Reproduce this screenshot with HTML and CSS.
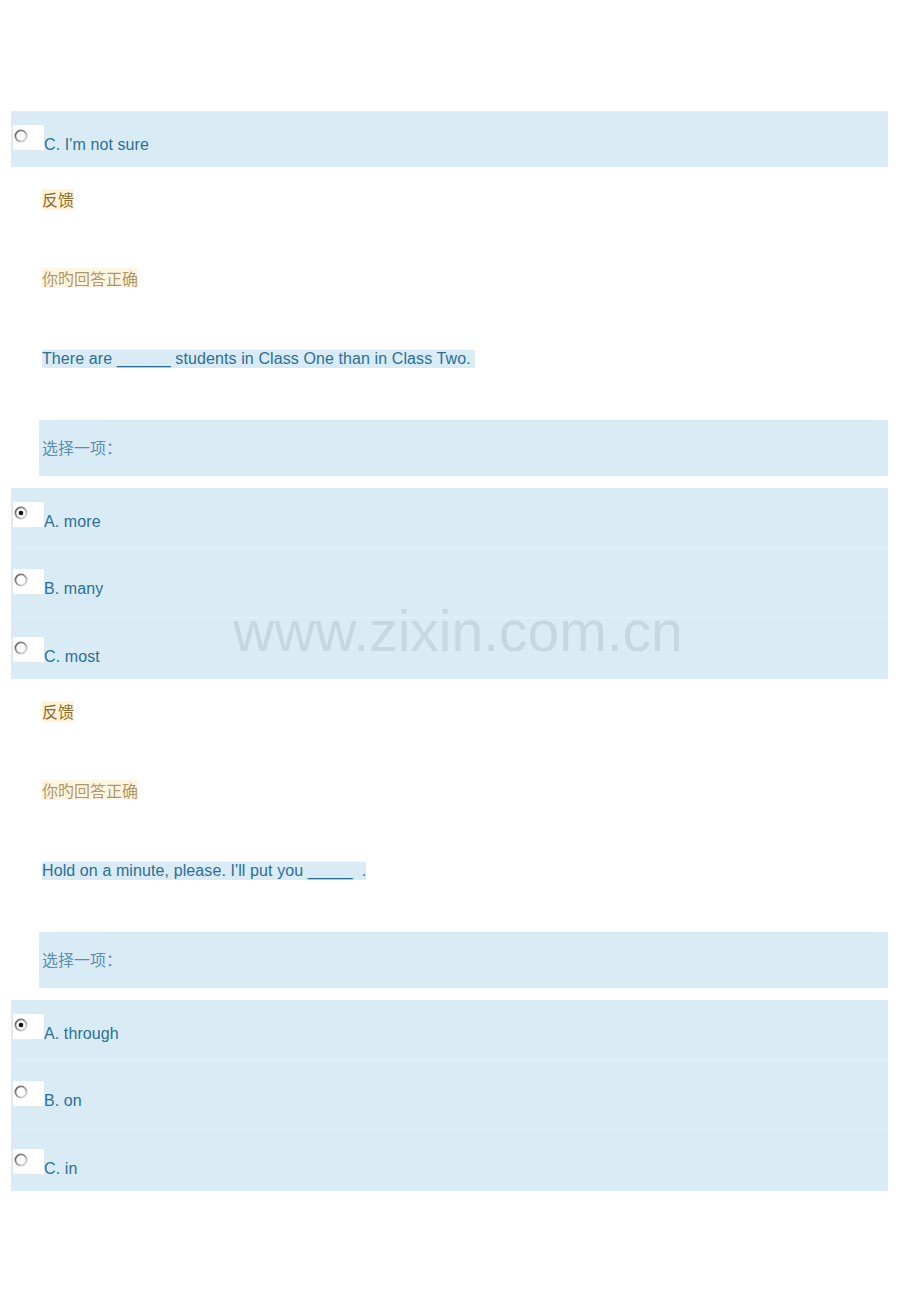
FILE: index.html
```html
<!DOCTYPE html>
<html lang="zh">
<head>
<meta charset="utf-8">
<title>Quiz</title>
<link rel="stylesheet" href="styles.css">
</head>
<body>
<div class="page">
  <div class="opts">
    <div class="opt only"><svg class="radio" width="31" height="25" viewBox="0 0 31 25"><use href="#r-off"/></svg>C. I'm not sure</div>
  </div>

  <div class="fb-label"><span>反馈</span></div>
  <div class="fb-text"><span>你旳回答正确</span></div>
  <div class="qtext"><span>There are ______ students in Class One than in Class Two. </span></div>
  <div class="prompt">选择一项：</div>
  <div class="opts">
    <div class="opt"><svg class="radio" width="31" height="25" viewBox="0 0 31 25"><use href="#r-on"/></svg>A. more</div>
    <div class="opt"><svg class="radio" width="31" height="25" viewBox="0 0 31 25"><use href="#r-off"/></svg>B. many</div>
    <div class="opt"><svg class="radio" width="31" height="25" viewBox="0 0 31 25"><use href="#r-off"/></svg>C. most</div>
  </div>

  <div class="fb-label"><span>反馈</span></div>
  <div class="fb-text"><span>你旳回答正确</span></div>
  <div class="qtext"><span>Hold on a minute, please. I'll put you _____&nbsp; .</span></div>
  <div class="prompt">选择一项：</div>
  <div class="opts">
    <div class="opt"><svg class="radio" width="31" height="25" viewBox="0 0 31 25"><use href="#r-on"/></svg>A. through</div>
    <div class="opt"><svg class="radio" width="31" height="25" viewBox="0 0 31 25"><use href="#r-off"/></svg>B. on</div>
    <div class="opt"><svg class="radio" width="31" height="25" viewBox="0 0 31 25"><use href="#r-off"/></svg>C. in</div>
  </div>

  <div class="watermark">www.zixin.com.cn</div>

  <svg class="defs" width="0" height="0">
    <defs>
      <linearGradient id="ring" x1="0" y1="0" x2="1" y2="1">
        <stop offset="0" stop-color="#555555"/>
        <stop offset="0.5" stop-color="#9a9a9a"/>
        <stop offset="1" stop-color="#e6e6e6"/>
      </linearGradient>
      <g id="r-off">
        <rect x="0" y="0" width="31" height="25" fill="#ffffff"/>
        <circle cx="8" cy="11" r="5.6" fill="#ffffff" stroke="url(#ring)" stroke-width="1.8"/>
      </g>
      <g id="r-on">
        <rect x="0" y="0" width="31" height="25" fill="#ffffff"/>
        <circle cx="8" cy="11" r="5.6" fill="#ffffff" stroke="url(#ring)" stroke-width="1.8"/>
        <circle cx="8" cy="11" r="2.3" fill="#111111"/>
      </g>
    </defs>
  </svg>
</div>
</body>
</html>
```

FILE: styles.css
```css
html, body {
  margin: 0;
  padding: 0;
  background: #ffffff;
}

body {
  font-family: "Liberation Sans", Arial, "Noto Sans CJK SC", sans-serif;
  font-size: 16px;
  color: #2d6e98;
}

.page {
  position: relative;
  width: 920px;
  height: 1302px;
  padding-top: 111px;
  box-sizing: border-box;
  overflow: hidden;
}

.defs {
  position: absolute;
  left: 0;
  top: 0;
}

.opts {
  margin-left: 11px;
  width: 877px;
  background: #d9ecf6;
  margin-top: 12px;
}

.opts:first-child {
  margin-top: 0;
}

.opt {
  box-sizing: border-box;
  padding-left: 2px;
  white-space: nowrap;
  line-height: normal;
  letter-spacing: 0.1px;
  color: #2d6e98;
}

.opt:nth-child(1) {
  height: 60px;
  padding-top: 14px;
}

.opt:nth-child(2) {
  height: 69px;
  padding-top: 20px;
  border-top: 1px solid #e2f1f9;
}

.opt:nth-child(3) {
  height: 62px;
  padding-top: 19px;
  border-top: 1px solid #e2f1f9;
}

.opt.only {
  height: 56px;
  padding-top: 14px;
}

.radio {
  display: inline-block;
  vertical-align: baseline;
}

.fb-label,
.fb-text,
.qtext {
  margin-left: 42px;
}

.fb-label span,
.fb-text span,
.qtext span {
  display: inline-block;
  vertical-align: top;
}

.fb-label {
  margin-top: 22px;
  height: 21px;
  line-height: 21px;
  font-family: "Noto Sans CJK SC", sans-serif;
}

.fb-label span {
  height: 21px;
  background: #fdf3da;
  color: #8c6a2e;
}

.fb-text {
  margin-top: 58px;
  height: 20px;
  line-height: 20px;
  font-family: "Noto Sans CJK SC", sans-serif;
}

.fb-text span {
  height: 20px;
  background: #fef6e3;
  color: #b0976a;
}

.qtext {
  margin-top: 62px;
  height: 18px;
  line-height: 18px;
}

.qtext span {
  height: 18px;
  background: #d9ecf6;
  color: #2d6e98;
  letter-spacing: 0.1px;
  white-space: pre;
}

.prompt {
  margin-top: 52px;
  margin-left: 39px;
  width: 849px;
  height: 56px;
  box-sizing: border-box;
  padding-left: 3px;
  line-height: 54px;
  background: #d9ecf6;
  color: #5b8db0;
  font-family: "Noto Sans CJK TC", "Noto Sans CJK SC", sans-serif;
}

.watermark {
  position: absolute;
  left: 233px;
  top: 603px;
  font-family: "Liberation Sans", Arial, sans-serif;
  font-size: 57px;
  line-height: 57px;
  color: #c6d7df;
  white-space: nowrap;
  pointer-events: none;
}
```
